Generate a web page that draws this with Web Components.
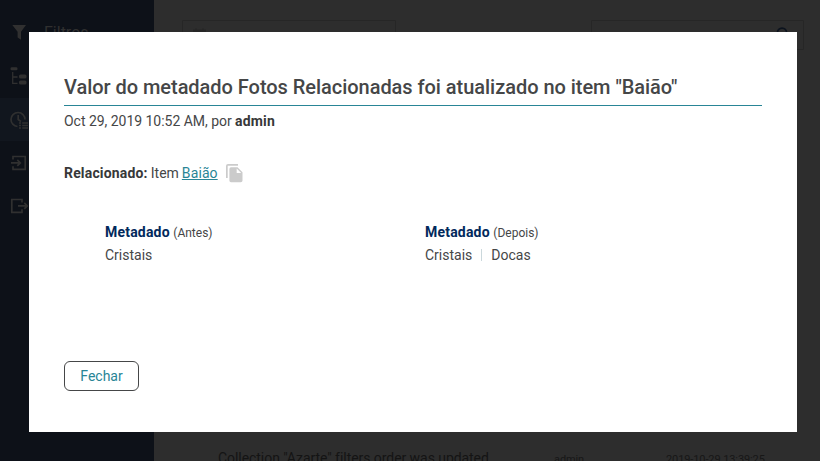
<!DOCTYPE html>
<html lang="pt-BR">
<head>
<meta charset="utf-8">
<title>Atividades</title>
<style>
  body {
    margin: 0;
    height: 461px;
    overflow: hidden;
    background: #2d2d2d;
    font-family: Roboto, "Liberation Sans", sans-serif;
    font-size: 14px;
    color: #454647;
  }
</style>
</head>
<body>

<activity-page>
  <side-menu slot="menu">
    <menu-entry icon="filter">Filtros</menu-entry>
    <menu-entry icon="tree"></menu-entry>
    <menu-entry icon="activities" active></menu-entry>
    <menu-entry icon="import"></menu-entry>
    <menu-entry icon="export"></menu-entry>
  </side-menu>
  <search-field icon="calendar"></search-field>
  <search-field icon="search"></search-field>
  <activity-row slot="rows">
    Collection "Azarte" filters order was updated
    <span slot="user">admin</span>
    <span slot="date">2019-10-29 13:39:25</span>
  </activity-row>
</activity-page>

<modal-card>
  <span slot="title">Valor do metadado Fotos Relacionadas foi atualizado no item "Baião"</span>
  <span slot="meta">Oct 29, 2019 10:52 AM, por</span>
  <span slot="author">admin</span>
  <related-item label="Relacionado:" kind="Item">Baião</related-item>
  <value-diff>
    <value-column label="Metadado" when="(Antes)"><span>Cristais</span></value-column>
    <value-column label="Metadado" when="(Depois)"><span>Cristais</span><span>Docas</span></value-column>
  </value-diff>
  <outline-button slot="footer">Fechar</outline-button>
</modal-card>

<script>
// attach a shadow root holding the given markup
function shadow(el, html) {
  const template = document.createElement('template');
  template.innerHTML = html;
  el.attachShadow({mode: 'open'}).appendChild(template.content.cloneNode(true));
  return el.shadowRoot;
}

const ICONS = {
  filter: '<path fill="currentColor" d="M3.300 2H17L12 8.800V16.800L8.600 14.500V8.800z"/>',
  tree: '<g fill="currentColor"><rect x="1.500" y="1.300" width="7" height="3" rx="1.300"/><rect x="10" y="8.500" width="7.500" height="4" rx="1.500"/><rect x="10" y="14.500" width="7.500" height="4" rx="1.500"/></g><path fill="none" stroke="currentColor" stroke-width="1.300" d="M3.700 6V17.300H8.500M3.700 11H8.500"/>',
  activities: '<path fill="none" stroke="currentColor" stroke-width="1.700" d="M16 9.500A7 7 0 1 0 8.500 16.500M9.200 5V9.500L12 11.500"/><path fill="none" stroke="currentColor" stroke-width="1.500" stroke-dasharray="2 1.200 6" d="M10 13H19M10 15.500H19M10 18H19"/>',
  import: '<path fill="none" stroke="currentColor" stroke-width="1.700" d="M4 6.500V3.500H16.200V16.300H4V13.300M2 9.900H11M8.300 6.900L11.300 9.900L8.300 12.900"/>',
  export: '<path fill="none" stroke="currentColor" stroke-width="1.700" d="M13 6.500V3.500H2.800V16.300H13V13.300M9 9.900H18M15.300 6.900L18.300 9.900L15.300 12.900"/>',
  calendar: '<path fill="#262626" d="M1 2.500H3V1.500H5V2.500H10V1.500H12V2.500H14V15H1z"/>',
  search: '<circle cx="8" cy="5.700" r="4.600" fill="none" stroke="#0c131e" stroke-width="1.700"/><path stroke="#0c131e" stroke-width="1.800" d="M5 9L1 13"/>'
};

customElements.define('activity-page', class extends HTMLElement {
  constructor() {
    super();
    shadow(this, `
      <style>
        :host { display: flex; height: 461px; }
        main { flex: 1; display: flex; flex-direction: column; justify-content: space-between; }
        header { display: flex; justify-content: space-between; padding: 20px 16px 0 28px; }
      </style>
      <slot name="menu"></slot>
      <main>
        <header><slot></slot></header>
        <slot name="rows"></slot>
      </main>
    `);
  }
});

customElements.define('side-menu', class extends HTMLElement {
  constructor() {
    super();
    shadow(this, `
      <style>
        :host { display: block; box-sizing: border-box; width: 154px; padding-top: 11px; background: #0d1118; color: #303030; }
      </style>
      <slot></slot>
    `);
  }
});

customElements.define('menu-entry', class extends HTMLElement {
  constructor() {
    super();
    shadow(this, `
      <style>
        :host { display: flex; align-items: center; gap: 16px; height: 43.300px; padding-left: 9px; font-size: 16px; }
        :host([active]) { background: #11161e; }
        svg { width: 19px; height: 19px; flex: none; }
      </style>
      <svg viewBox="0 0 19 19">${ICONS[this.getAttribute('icon')]}</svg>
      <slot></slot>
    `);
  }
});

customElements.define('search-field', class extends HTMLElement {
  constructor() {
    super();
    shadow(this, `
      <style>
        :host { display: flex; justify-content: flex-end; box-sizing: border-box; width: 213.500px; height: 30px; padding: 6px 13px 6px 9px; border: 1px solid #262626; border-radius: 1px; }
        :host([icon="calendar"]) { justify-content: flex-start; }
        svg { width: 16px; height: 16px; }
      </style>
      <svg viewBox="0 0 16 16">${ICONS[this.getAttribute('icon')]}</svg>
    `);
  }
});

customElements.define('activity-row', class extends HTMLElement {
  constructor() {
    super();
    shadow(this, `
      <style>
        :host { display: grid; grid-template-columns: 336px 112px auto; align-items: baseline; height: 12px; padding-left: 64px; line-height: 18px; letter-spacing: -0.055px; color: #141414; white-space: nowrap; }
        small { font-size: 11px; letter-spacing: -0.100px; color: #171717; }
      </style>
      <span><slot></slot></span>
      <small><slot name="user"></slot></small>
      <small><slot name="date"></slot></small>
    `);
  }
});

customElements.define('modal-card', class extends HTMLElement {
  constructor() {
    super();
    shadow(this, `
      <style>
        :host {
          position: fixed; left: 29px; top: 32px;
          display: flex; flex-direction: column;
          box-sizing: border-box; width: 768px; height: 400px;
          padding: 41px 35px;
          background: #fff;
        }
        h1 { margin: 0; height: 32px; line-height: 28px; font-size: 20px; font-weight: 500; letter-spacing: -0.040px; border-bottom: 1px solid #298596; white-space: nowrap; }
        p { margin: 5px 0 32px; line-height: 20px; letter-spacing: -0.030px; }
        b { color: #373839; letter-spacing: 0.150px; }
        footer { margin-top: auto; display: flex; }
      </style>
      <h1><slot name="title"></slot></h1>
      <p><slot name="meta"></slot> <b><slot name="author"></slot></b></p>
      <slot></slot>
      <footer><slot name="footer"></slot></footer>
    `);
  }
});

customElements.define('related-item', class extends HTMLElement {
  constructor() {
    super();
    shadow(this, `
      <style>
        :host { display: flex; align-items: center; gap: 3px; height: 20px; line-height: 20px; }
        b { color: #373839; letter-spacing: 0.170px; }
        a { color: #298596; text-decoration: underline; letter-spacing: 0.100px; }
        svg { width: 17px; height: 19px; margin-left: 5px; }
      </style>
      <b>${this.getAttribute('label')}</b>
      <span>${this.getAttribute('kind')}</span>
      <a><slot></slot></a>
      <svg viewBox="0 0 17 19"><path fill="#cbcbcb" d="M0 2Q0 0 2 0H12V1.700H1.700V14H0zM5 3.300H11.500L16.500 8.300V16.500Q16.500 18.300 14.700 18.300H5Q3.400 18.300 3.400 16.500V5Q3.400 3.300 5 3.300z"/><path fill="#fff" d="M10.700 4.500V9H15.200z"/></svg>
    `);
  }
});

customElements.define('value-diff', class extends HTMLElement {
  constructor() {
    super();
    shadow(this, `
      <style>
        :host { display: grid; grid-template-columns: 320px 1fr; margin-top: 38px; padding-left: 41px; }
      </style>
      <slot></slot>
    `);
  }
});

customElements.define('value-column', class extends HTMLElement {
  constructor() {
    super();
    shadow(this, `
      <style>
        :host { display: block; line-height: 23px; }
        b { color: #01295c; letter-spacing: 0.200px; }
        small { font-size: 12px; }
        header { height: 23px; }
        div { display: flex; height: 22px; line-height: 22px; }
        ::slotted(span:not(:first-child)) { display: flex; align-items: center; }
        ::slotted(span:not(:first-child))::before { content: ""; width: 1px; height: 12px; margin: 0 9px; background: #cbd8dc; }
      </style>
      <header><b>${this.getAttribute('label')}</b> <small>${this.getAttribute('when')}</small></header>
      <div><slot></slot></div>
    `);
  }
});

customElements.define('outline-button', class extends HTMLElement {
  constructor() {
    super();
    shadow(this, `
      <style>
        :host { display: block; }
        button { box-sizing: border-box; width: 75px; height: 30px; padding: 0; border: 1px solid #454647; border-radius: 6px; background: #fff; color: #298596; font: inherit; }
      </style>
      <button type="button"><slot></slot></button>
    `);
  }
});
</script>
</body>
</html>
